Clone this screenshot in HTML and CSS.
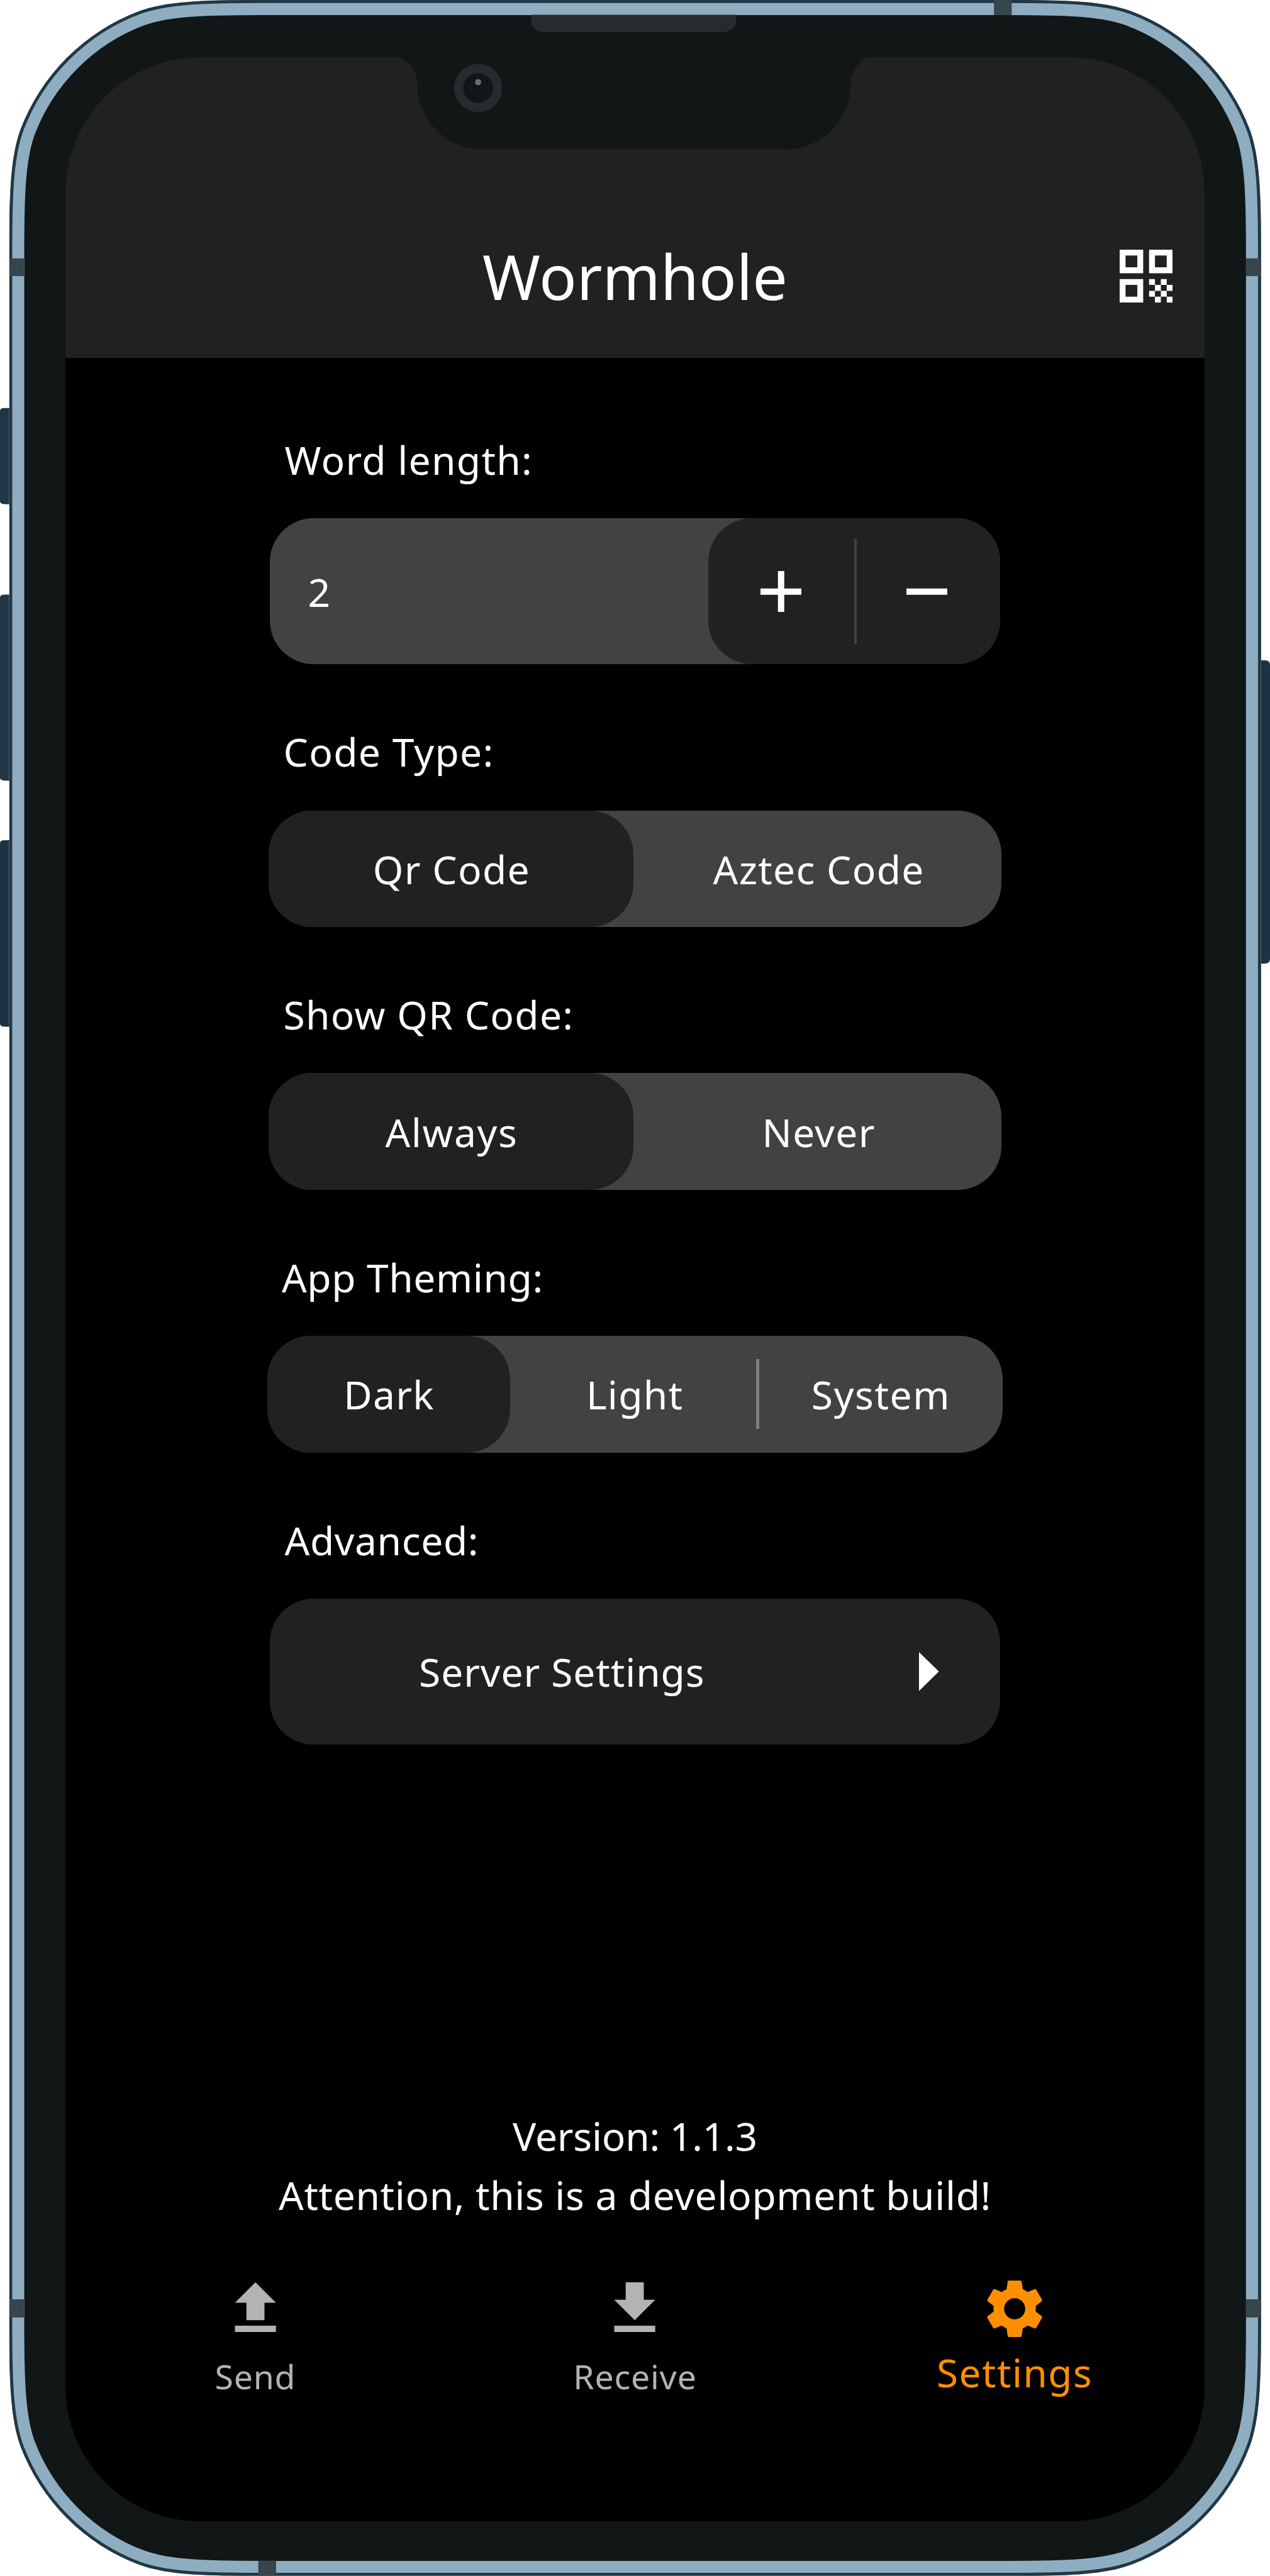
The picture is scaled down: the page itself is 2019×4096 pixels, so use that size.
FILE: index.html
```html
<!DOCTYPE html>
<html lang="en">
<head>
<meta charset="utf-8">
<title>Wormhole</title>
<link rel="stylesheet" href="styles.css">
</head>
<body>
<div class="phone">
  <svg class="device" viewBox="0 0 2619 5313" aria-hidden="true">
    <defs>
      <path id="body" d="M19 520C19 400 21.500 325 42 268A420 420 0 0 1 287 23C344 2.500 419 0 539 0H2080.500C2200.500 0 2275.500 2.500 2332.500 23A420 420 0 0 1 2577.500 268C2598 325 2600.500 400 2600.500 520V4793C2600.500 4913 2598 4988 2577.500 5045A420 420 0 0 1 2332.500 5290C2275.500 5310.500 2200.500 5313 2080.500 5313H539C419 5313 344 5310.500 287 5290A420 420 0 0 1 42 5045C21.500 4988 19 4913 19 4793Z"/>
      <clipPath id="body-clip"><use href="#body"/></clipPath>
    </defs>
    <g class="keys">
      <path d="M20 841.500H10Q0 841.500 0 847V1034Q0 1040 10 1040H20Z"/>
      <path d="M20 1226.500H10Q0 1226.500 0 1232V1604Q0 1610 10 1610H20Z"/>
      <path class="key-blue" d="M20 1733H10Q0 1733 0 1739V2111Q0 2117.500 10 2117.500H20Z"/>
      <path class="key-blue" d="M2600 1362H2609Q2619 1362 2619 1371V1978Q2619 1987.500 2609 1987.500H2600Z"/>
    </g>
    <g clip-path="url(#body-clip)">
      <use href="#body" class="bezel"/>
      <use href="#body" class="rim"/>
      <use href="#body" class="edge"/>
      <g class="antenna">
        <rect x="19" y="533" width="30.500" height="36.500"/>
        <rect x="2569.500" y="533" width="31" height="36.500"/>
        <rect x="2049.700" y="0" width="36.600" height="31"/>
        <rect x="19" y="4742.500" width="30.500" height="37.500"/>
        <rect x="2569.500" y="4742.500" width="31" height="37.500"/>
        <rect x="532.700" y="5281.500" width="36.700" height="32"/>
      </g>
    </g>
    <path class="seam" d="M18.500 844V1037M18.500 1229V1607M18.500 1736V2114M2600.500 1365V1984"/>
    <path class="speaker" d="M1095.500 30.500H1518V43Q1518 60 1496 66H1118Q1095.500 60 1095.500 43Z"/>
  </svg>

  <div class="screen">
    <header class="appbar">
      <h1 class="title">Wormhole</h1>
      <svg class="qr" viewBox="0 0 9 9" aria-hidden="true">
        <path fill-rule="evenodd" d="M0 0h4v4H0zM1 1v2h2V1zM5 0h4v4H5zM6 1v2h2V1zM0 5h4v4H0zM1 6v2h2V6z"/>
        <path d="M5 5h1v1H5zM7 5h1v1H7zM6 6h1v1H6zM8 6h1v1H8zM5 7h1v1H5zM7 7h1v1H7zM6 8h1v1H6zM8 8h1v1H8z"/>
      </svg>
    </header>

    <main class="settings">
      <section class="group">
        <h2 class="label">Word length:</h2>
        <div class="stepper">
          <span class="value">2</span>
          <div class="buttons">
            <svg class="sign" viewBox="0 0 85 85"><path d="M36 0h13v36h36v13H49v36H36V49H0V36h36z"/></svg>
            <span class="divider"></span>
            <svg class="sign" viewBox="0 0 85 85"><path d="M0 36h85v13H0z"/></svg>
          </div>
        </div>
      </section>
      <section class="group group-two">
        <h2 class="label">Code Type:</h2>
        <div class="segments">
          <span class="option selected">Qr Code</span>
          <span class="option">Aztec Code</span>
        </div>
      </section>
      <section class="group group-two">
        <h2 class="label">Show QR Code:</h2>
        <div class="segments">
          <span class="option option-wide selected">Always</span>
          <span class="option">Never</span>
        </div>
      </section>
      <section class="group group-three">
        <h2 class="label label-tight">App Theming:</h2>
        <div class="segments">
          <span class="option selected">Dark</span>
          <span class="option">Light</span>
          <span class="option option-wide split">System</span>
        </div>
      </section>
      <section class="group">
        <h2 class="label label-tight">Advanced:</h2>
        <div class="link">
          <span class="link-text">Server Settings</span>
          <svg class="arrow" viewBox="0 0 41 80"><path d="M0 0L41 40L0 80z"/></svg>
        </div>
      </section>
      <footer class="about">
        <p class="version">Version: 1.1.3</p>
        <p class="build">Attention, this is a development build!</p>
      </footer>
    </main>

    <nav class="tabs">
      <a class="tab">
        <svg class="tab-icon" viewBox="0 0 145.500 145.500"><path d="M72.750 18L115 60.400H91.400V96.300H54.100V60.400H30.500zM30.500 107.600H115V120.800H30.500z"/></svg>
        <span>Send</span>
      </a>
      <a class="tab">
        <svg class="tab-icon" viewBox="0 0 145.500 145.500"><path d="M54.100 18H91.400V54H115L72.750 96.400L30.500 54H54.100zM30.500 107.600H115V120.800H30.500z"/></svg>
        <span>Receive</span>
      </a>
      <a class="tab active">
        <svg class="tab-icon" viewBox="0 0 24 24"><path d="M19.140 12.940c.04-.3.06-.61.06-.94 0-.32-.02-.64-.07-.94l2.030-1.580c.18-.14.23-.41.12-.61l-1.920-3.320c-.12-.22-.37-.29-.59-.22l-2.390.96c-.5-.38-1.030-.7-1.620-.94L14.400 2.810c-.04-.24-.24-.41-.48-.41h-3.840c-.24 0-.43.17-.47.41L9.250 5.350c-.59.24-1.130.57-1.620.94L5.240 5.330c-.22-.08-.47 0-.59.22L2.740 8.870c-.12.21-.08.47.12.61l2.030 1.580c-.05.3-.09.63-.09.94s.02.64.07.94l-2.030 1.580c-.18.14-.23.41-.12.61l1.920 3.320c.12.22.37.29.59.22l2.390-.96c.5.38 1.030.7 1.620.94l.36 2.540c.05.24.24.41.48.41h3.840c.24 0 .44-.17.47-.41l.36-2.540c.59-.24 1.130-.56 1.620-.94l2.390.96c.22.08.47 0 .59-.22l1.920-3.320c.12-.22.07-.47-.12-.61zM12 15.600c-1.980 0-3.600-1.620-3.600-3.600s1.620-3.600 3.600-3.600 3.600 1.620 3.600 3.600-1.620 3.600-3.600 3.600z"/></svg>
        <span>Settings</span>
      </a>
    </nav>

    <svg class="notch" viewBox="0 0 970 191" aria-hidden="true">
      <path d="M0 0C23 10 38 30 38 55A136 136 0 0 0 174 190.500H796A136 136 0 0 0 932 55C932 30 947 10 966 0Z"/>
      <circle class="lens-ring" cx="163.600" cy="63.500" r="40.200"/>
      <circle class="lens-glint" cx="163.600" cy="51.500" r="6.300"/>
    </svg>
  </div>
</div>
</body>
</html>
```

FILE: styles.css
```css
/* 1rem is 1/26.19 of the window width, so the device scales as a whole */
html {
  font-size: calc(100vw / 26.19);
  background: #fff;
}

body {
  margin: 0;
  font-family: "Noto Sans", sans-serif;
  color: #fff;
}

h1, h2, p {
  margin: 0;
  font-weight: 400;
}

svg {
  display: block;
  fill: currentColor;
}

.phone {
  position: relative;
  box-sizing: border-box;
  width: 26.19rem;
  height: 53.13rem;
  padding: 1.18rem 1.35rem 1.12rem;
  overflow: hidden;
}

/* device shell */
.device {
  position: absolute;
  inset: 0;
  width: 100%;
  height: 100%;
}

.keys { fill: #213743; }
.key-blue { fill: #1c3344; }
.bezel { fill: #111616; }
.rim { fill: none; stroke: #8fadc1; stroke-width: 62; }
.edge { fill: none; stroke: #213744; stroke-width: 12.500; }
.antenna { fill: #37454c; }
.seam { fill: none; stroke: #5c6a6f; stroke-width: 1; }
.speaker { fill: #262b2e; }

.notch {
  position: absolute;
  top: 0;
  left: 6.87rem;
  width: 9.7rem;
  height: 1.91rem;
  fill: #111616;
}

.lens-ring { stroke: #262b2e; stroke-width: 18.700; }
.lens-glint { fill: #647175; }

/* screen */
.screen {
  position: relative;
  display: flex;
  flex-direction: column;
  height: 50.83rem;
  width: 23.49rem;
  border-radius: 2.78rem;
  overflow: hidden;
  background: #000;
  font-size: .808rem;
  line-height: 1rem;
  letter-spacing: .0168rem;
}

.appbar {
  box-sizing: border-box;
  flex: none;
  display: grid;
  grid-template-columns: 1fr auto 1fr;
  align-items: center;
  height: 6.197rem;
  padding: 2.826rem .661rem 0;
  background: #212121;
}

.title {
  grid-column: 2;
  font-size: 1.282rem;
  line-height: 1.5rem;
  letter-spacing: 0;
}

.qr {
  justify-self: end;
  width: 1.092rem;
  height: 1.092rem;
}

.settings {
  flex: 1;
  display: flex;
  flex-direction: column;
  align-items: center;
  gap: 1.297rem;
  padding-top: 1.6rem;
}

.group { width: 15.05rem; }
.group-two { width: 15.1rem; }
.group-three { width: 15.17rem; }

.label {
  margin-bottom: .717rem;
  padding-left: .3rem;
  font-size: inherit;
}

.label-tight { letter-spacing: .008rem; }

.stepper {
  display: flex;
  justify-content: space-between;
  align-items: center;
  height: 3.01rem;
  border-radius: .9rem;
  background: #424242;
}

.value { padding-left: .78rem; }

.buttons {
  display: flex;
  align-items: center;
  justify-content: space-between;
  box-sizing: border-box;
  width: 6.01rem;
  height: 100%;
  padding: 0 1.08rem 0 1.07rem;
  border-radius: .9rem;
  background: #212121;
}

.sign {
  width: .85rem;
  height: .85rem;
}

.divider {
  width: .06rem;
  height: 2.175rem;
  margin-left: .06rem;
  background: #424242;
}

.segments {
  display: flex;
  height: 2.405rem;
  border-radius: .9rem;
  background: #424242;
}

.option {
  box-sizing: border-box;
  flex: 1;
  display: flex;
  align-items: center;
  justify-content: center;
  padding-left: .06rem;
}

.option-wide { letter-spacing: .021rem; }

.selected {
  padding-left: .015rem;
  border-radius: .9rem;
  background: #212121;
}

.group-two .selected { flex: none; width: 7.52rem; }
.group-three .selected { flex: none; width: 5.015rem; }

/* option with a rule on its left edge */
.split {
  flex: none;
  width: 5.085rem;
  padding-left: 0;
}

.split::before {
  content: "";
  width: .06rem;
  height: 1.44rem;
  margin-right: auto;
  background: #808080;
}

.split::after {
  content: "";
  margin-left: auto;
}

.link {
  display: flex;
  align-items: center;
  justify-content: space-between;
  height: 3.01rem;
  box-sizing: border-box;
  padding: 0 1.255rem 0 3.07rem;
  border-radius: .9rem;
  background: #212121;
}

.link-text { letter-spacing: .012rem; }

.arrow {
  width: .41rem;
  height: .8rem;
}

.about {
  margin-top: auto;
  text-align: center;
  line-height: 1.21rem;
}

.version { letter-spacing: -.003rem; }
.build { letter-spacing: .0085rem; }

/* bottom navigation */
.tabs {
  flex: none;
  box-sizing: border-box;
  display: grid;
  grid-template-columns: repeat(3, 1fr);
  height: 6.142rem;
  padding-top: 1.024rem;
}

.tab {
  display: flex;
  flex-direction: column;
  align-items: center;
  gap: .162rem;
  color: #b3b3b3;
  font-size: .694rem;
  letter-spacing: .011rem;
}

.tab-icon {
  width: 1.455rem;
  height: 1.455rem;
}

.active {
  gap: .09rem;
  color: #ff8f00;
  font-size: .804rem;
  letter-spacing: .02rem;
}
```
